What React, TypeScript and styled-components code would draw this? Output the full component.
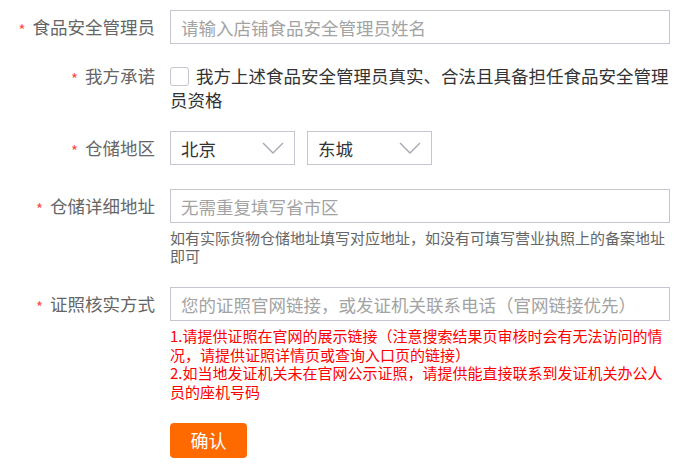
import React from "react"
import styled, { createGlobalStyle } from "styled-components"

const GlobalStyle = createGlobalStyle`
  body {
    margin: 0;
    background: #fff;
    font-family: "Noto Sans CJK SC", "Noto Sans", sans-serif;
  }
  * { box-sizing: border-box; }
`

// Styles
const Form = styled.div`
  padding-top: 10px;
  display: flex;
  flex-direction: column;
`
const Row = styled.div<{ $mb?: number }>`
  display: grid;
  grid-template-columns: 155px 500px;
  column-gap: 15px;
  margin-bottom: ${(p) => p.$mb ?? 20}px;
`
const Label = styled.div<{ $lh?: number }>`
  text-align: right;
  font-size: 17.5px;
  color: #666;
  height: ${(p) => p.$lh ?? 34}px;
  line-height: ${(p) => p.$lh ?? 34}px;
  white-space: nowrap;
`
const Star = styled.span`
  color: #ff4a4a;
  font-size: 15px;
  line-height: 0;
  margin-right: 7px;
  vertical-align: -2px;
`
const Field = styled.div`
  display: flex;
  flex-direction: column;
`
const Input = styled.input`
  width: 500px;
  height: 34px;
  border: 1px solid #c4c6cf;
  padding: 0 10px;
  font-family: inherit;
  font-size: 17.5px;
  color: #333;
  outline: none;
  &::placeholder { color: #a3a3a3; }
`
const Agree = styled.div`
  font-size: 17.5px;
  line-height: 24px;
  color: #333;
`
const Check = styled.span`
  display: inline-block;
  width: 19px;
  height: 19px;
  border: 1px solid #c4c6cf;
  border-radius: 3px;
  margin-right: 7px;
  vertical-align: -3px;
`
const Selects = styled.div`
  display: flex;
  gap: 12px;
`
const Select = styled.div`
  width: 125px;
  height: 34px;
  border: 1px solid #c4c6cf;
  display: flex;
  align-items: center;
  justify-content: space-between;
  padding: 0 10px 0 10px;
  font-size: 17.5px;
  color: #333;
`
const Hint = styled.div<{ $red?: boolean }>`
  margin-top: 6px;
  font-size: 15px;
  line-height: ${(p) => (p.$red ? 18.7 : 18)}px;
  color: ${(p) => (p.$red ? "#ff0000" : "#666")};
`
const Button = styled.button`
  width: 77px;
  height: 35px;
  border: none;
  border-radius: 4px;
  background: #ff6a00;
  color: #fff;
  font-family: inherit;
  font-size: 18px;
  cursor: pointer;
`

const Chevron: React.FC = () => (
  <svg width="22" height="12" viewBox="0 0 22 12">
    <polyline points="1,1 11,11 21,1" fill="none" stroke="#a6a8b2" strokeWidth="1.4" />
  </svg>
)

const App: React.FC = () => {
  return (
    <>
      <GlobalStyle />
      <Form>
        <Row>
          <Label><Star>*</Star>食品安全管理员</Label>
          <Input placeholder="请输入店铺食品安全管理员姓名" />
        </Row>
        <Row $mb={19}>
          <Label $lh={24}><Star>*</Star>我方承诺</Label>
          <Agree>
            <Check />
            我方上述食品安全管理员真实、合法且具备担任食品安全管理员资格
          </Agree>
        </Row>
        <Row $mb={24}>
          <Label><Star>*</Star>仓储地区</Label>
          <Selects>
            <Select>北京<Chevron /></Select>
            <Select>东城<Chevron /></Select>
          </Selects>
        </Row>
        <Row $mb={22}>
          <Label><Star>*</Star>仓储详细地址</Label>
          <Field>
            <Input placeholder="无需重复填写省市区" />
            <Hint>如有实际货物仓储地址填写对应地址，如没有可填写营业执照上的备案地址即可</Hint>
          </Field>
        </Row>
        <Row $mb={21}>
          <Label><Star>*</Star>证照核实方式</Label>
          <Field>
            <Input placeholder="您的证照官网链接，或发证机关联系电话（官网链接优先）" />
            <Hint $red>
              1.请提供证照在官网的展示链接（注意搜索结果页审核时会有无法访问的情况，请提供证照详情页或查询入口页的链接）
              <br />
              2.如当地发证机关未在官网公示证照，请提供能直接联系到发证机关办公人员的座机号码
            </Hint>
          </Field>
        </Row>
        <Row>
          <div />
          <div><Button>确认</Button></div>
        </Row>
      </Form>
    </>
  )
}

export default App
